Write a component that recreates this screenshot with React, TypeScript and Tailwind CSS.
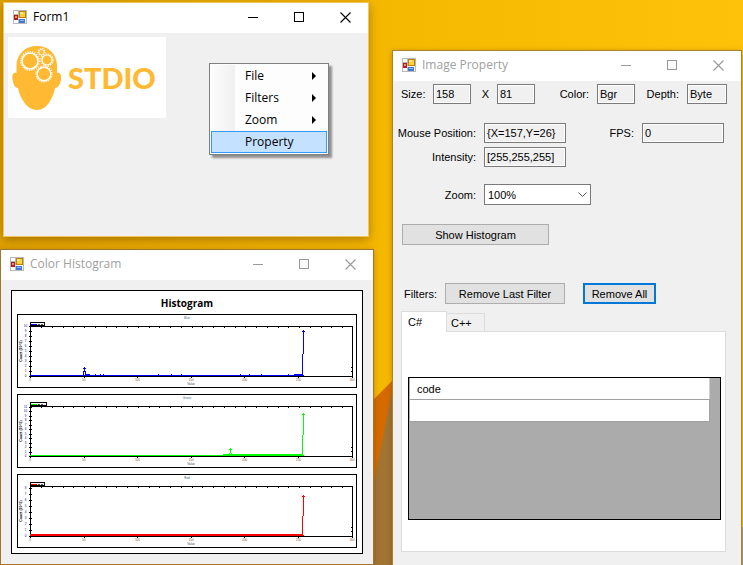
import { useState, type ReactNode } from 'react'

const titleFont = "font-['Open_Sans','Noto_Sans',sans-serif]"

function FormIcon() {
  return (
    <svg width="14" height="14" viewBox="0 0 14 14" aria-hidden="true" shapeRendering="crispEdges">
      <rect width="14" height="14" fill="#b9b9b9" />
      <path d="M1 1h4v3H1zM1 10h4v3H1zM12 9h1v4h-1z" fill="#fff" />
      <rect x="1" y="5" width="4" height="5" fill="#b11d1d" />
      <rect x="2" y="6" width="2" height="2" fill="#ef8b80" />
      <rect x="6" y="1" width="7" height="7" fill="#b98500" />
      <rect x="7" y="2" width="5" height="5" fill="#ffcf3d" />
      <rect x="7" y="2" width="3" height="2" fill="#ffe697" />
      <rect x="5" y="8" width="8" height="1" fill="#fff" />
      <rect x="6" y="9" width="6" height="4" fill="#3f78d8" />
      <rect x="7" y="10" width="4" height="1" fill="#8db8f5" />
    </svg>
  )
}

interface WindowProps {
  title: string
  active?: boolean
  className: string
  children: ReactNode
}

function Window({ title, active = false, className, children }: WindowProps) {
  return (
    <section className={`absolute flex flex-col border bg-[#f0f0f0] ${className}`}>
      <header className="flex h-[30px] shrink-0 items-center bg-white pb-0.5 pl-[9px]">
        <FormIcon />
        <h2 className={`ml-1.5 flex-1 text-[12px] leading-4 ${titleFont} ${active ? 'text-black' : 'text-[#a0a0a0]'}`}>
          {title}
        </h2>
        <div className={`flex ${active ? 'text-black' : 'text-[#999999]'}`}>
          <button aria-label="Minimize" className="flex w-[46px] justify-center">
            <svg width="11" height="11" viewBox="0 0 11 11" shapeRendering="crispEdges">
              <path d="M0 5.5h10" stroke="currentColor" fill="none" />
            </svg>
          </button>
          <button aria-label="Maximize" className="flex w-[46px] justify-center">
            <svg width="11" height="11" viewBox="0 0 11 11" shapeRendering="crispEdges">
              <rect x="0.5" y="0.5" width="9" height="9" stroke="currentColor" fill="none" />
            </svg>
          </button>
          <button aria-label="Close" className="flex w-[46px] justify-center">
            <svg width="11" height="11" viewBox="0 0 11 11">
              <path d="M0.5 0.5l10 10M10.5 0.5l-10 10" stroke="currentColor" strokeWidth="1.1" fill="none" />
            </svg>
          </button>
        </div>
      </header>
      {children}
    </section>
  )
}

function Gear({ cx, cy, r, width }: { cx: number; cy: number; r: number; width: number }) {
  return (
    <g fill="none" stroke="#fff">
      <circle cx={cx} cy={cy} r={r} strokeWidth={width} />
      <circle cx={cx} cy={cy} r={r + width / 2 + 0.5} strokeWidth="1.2" strokeDasharray="1.2 1.2" />
    </g>
  )
}

function Logo() {
  return (
    <div className="flex h-[81px] w-[158px] items-center bg-white pl-1">
      <svg width="50" height="66" viewBox="0 0 50 66" aria-hidden="true">
        <path
          d="M25 1C13 1 5 9 4.500 20V28C1 27 0 30 0.500 34C1 39 3 43 6 43C8 53 15 65 25 65C35 65 41 53 43 43C46 43 48.500 39 49 34C49.500 30 48 27 45 28V20C44.500 9 37 1 25 1Z"
          fill="#ffb933"
        />
        <Gear cx={18} cy={16} r={8} width={1.6} />
        <Gear cx={35} cy={15} r={5} width={1.2} />
        <Gear cx={29.500} cy={7} r={2.600} width={0.8} />
        <Gear cx={32} cy={29} r={6.800} width={1.4} />
      </svg>
      <span className="ml-1.5 font-['Lato',sans-serif] text-[29px] leading-9 font-black text-[#ffb933]">STDIO</span>
    </div>
  )
}

const menuItems = [
  { label: 'File', submenu: true },
  { label: 'Filters', submenu: true },
  { label: 'Zoom', submenu: true },
  { label: 'Property', submenu: false },
]

function ContextMenu() {
  return (
    <div
      role="menu"
      className={`absolute top-[60px] left-[205px] w-[120px] border border-[#808080] bg-[#fdfdfd] p-px shadow-[3px_3px_2px_rgba(0,0,0,0.4)] text-[12px] text-black ${titleFont}`}
    >
      {menuItems.map(({ label, submenu }) => (
        <button
          key={label}
          role="menuitem"
          className={`flex h-[22px] w-full items-center border pr-2.5 pl-[33px] text-left leading-4 ${
            submenu
              ? 'border-transparent bg-[linear-gradient(to_right,#fcfcfc,#f0f0f0_23px,#fdfdfd_23px)]'
              : 'border-[#3399ff] bg-[#c4e1ff]'
          }`}
        >
          <span className="flex-1">{label}</span>
          {submenu && (
            <svg width="4" height="8" viewBox="0 0 4 8" aria-hidden="true">
              <path d="M0 0l4 4-4 4z" fill="currentColor" />
            </svg>
          )}
        </button>
      ))}
    </div>
  )
}

interface Channel {
  name: string
  color: string
  yStep: number
  legendWidth: number
  line: string
  baseline: string
  marks: number[][]
}

const channels: Channel[] = [
  {
    name: 'Blue',
    color: '#0000ff',
    yStep: 5,
    legendWidth: 14,
    line: 'M65.500 60V56H66.500V53M67.500 56V60M284.500 60V39M285.500 39V17',
    baseline: 'M12 60.500H286M68 59.500h4M77 59.500h1M82 59.500h1M85 59.500h1M140 59.500h1M153 59.500h1M163 59.500h1M222 59.500h1M231 59.500h1M243 59.500h1M270 59.500h1M276 59.500h8',
    marks: [[66.5, 53.5], [285.5, 16.5]],
  },
  {
    name: 'Green',
    color: '#00ff00',
    yStep: 4.5,
    legendWidth: 16,
    line: 'M211.500 60V58M212.500 58V54M213.500 60V58M284.500 60V40M285.500 40V20',
    baseline: 'M12 60.500H286M205 59.500H285',
    marks: [[212.5, 54.5], [285.5, 19.5]],
  },
  {
    name: 'Red',
    color: '#ff0000',
    yStep: 6,
    legendWidth: 14,
    line: 'M284.500 60V41M285.500 41V22',
    baseline: 'M12 60.500H286M12 59.500H285',
    marks: [[285.5, 21.5]],
  },
]

const xTicks = [0, 50, 100, 150, 200, 250, 300]

function HistogramChart({ channel }: { channel: Channel }) {
  const { name, color, yStep, legendWidth, line, baseline, marks } = channel
  const yTicks = Array.from({ length: Math.floor(50 / yStep) + 1 }, (_, i) => i)
  const minorTicks = Array.from({ length: 29 }, (_, i) => 23 + i * 10.75)

  return (
    <div className="border border-black bg-white">
      <svg
        className="block w-full font-['Liberation_Sans',sans-serif]"
        viewBox="0 0 338 72"
        role="img"
        aria-label={`${name} histogram`}
      >
        <g fontSize="3" textAnchor="middle">
          <text x="169" y="4" fill="#446688">{name}</text>
          <text x="173" y="70" fill="#444">Value</text>
          {xTicks.map((value, i) => (
            <text key={value} x={12 + i * 53.700} y="66" fill="#7a5030">{value}</text>
          ))}
          {yTicks.map((i) => (
            <text key={i} x="7.500" y={62 - i * yStep} fill="#000080">{i}</text>
          ))}
          <text transform="translate(3.500 36) rotate(-90)" fontWeight="bold" fontSize="3.500">Count (10^3)</text>
        </g>
        <g fill="none" shapeRendering="crispEdges">
          <rect x="12.500" y="7.500" width={legendWidth} height="3" stroke="#000" />
          <path d="M13 9h6" stroke={color} />
          <path d="M20 9h2M23 9h2" stroke="#555" />
          <rect x="12.500" y="11.500" width="322" height="50" stroke="#000" />
          <path d={minorTicks.map((x) => `M${Math.round(x)}.500 12v1`).join('')} stroke="#000" />
          <path d={yTicks.map((i) => `M11 ${Math.round(61 - i * yStep)}.500h3`).join('')} stroke="#000" />
          <path d="M333 52.500h2M333 56.500h2" stroke="#000" />
          <path d={baseline} stroke={color} />
          <path d={line} stroke={color} />
          {marks.map(([x, y]) => (
            <path key={x} d={`M${x - 1.500} ${y}h3M${x} ${y - 1.500}v3`} stroke={color} />
          ))}
          <path d={xTicks.map((_, i) => `M${Math.round(12 + i * 53.600)}.500 61v2`).join('')} stroke="#000" />
        </g>
      </svg>
    </div>
  )
}

interface FieldProps {
  id: string
  label: string
  value: string
  labelClass: string
  inputClass: string
}

function Field({ id, label, value, labelClass, inputClass }: FieldProps) {
  return (
    <>
      <label htmlFor={id} className={`shrink-0 text-right whitespace-nowrap ${labelClass}`}>
        {label}
      </label>
      <input
        id={id}
        readOnly
        value={value}
        className={`ml-2 h-5 shrink-0 border border-[#7a7a7a] bg-[#f0f0f0] px-0.5 shadow-[inset_0_0_0_1px_#fff] outline-none ${inputClass}`}
      />
    </>
  )
}

function PropertyForm() {
  const [tab, setTab] = useState('C#')

  return (
    <div className="flex flex-col pr-[15px] pb-8 pl-2 font-['Liberation_Sans',Arial,sans-serif] text-[11px] leading-4 text-black">
      <div className="mt-[3px] flex items-center">
        <Field id="width" label="Size:" value="158" labelClass="w-6" inputClass="w-[38px]" />
        <Field id="height" label="X" value="81" labelClass="w-[18px]" inputClass="w-[38px]" />
        <Field id="color" label="Color:" value="Bgr" labelClass="w-[54px]" inputClass="w-[38px]" />
        <Field id="depth" label="Depth:" value="Byte" labelClass="w-11" inputClass="w-10" />
      </div>
      <div className="mt-[19px] flex items-center">
        <Field id="mouse" label="Mouse Position:" value="{X=157,Y=26}" labelClass="-ml-2 w-[83px]" inputClass="w-[82px]" />
        <Field id="fps" label="FPS:" value="0" labelClass="w-[68px]" inputClass="w-[82px]" />
      </div>
      <div className="mt-1 flex items-center">
        <Field id="intensity" label="Intensity:" value="[255,255,255]" labelClass="w-[75px]" inputClass="w-[82px]" />
      </div>
      <div className="mt-[17px] flex items-center">
        <label htmlFor="zoom" className="w-[75px] text-right">Zoom:</label>
        <div className="relative ml-2">
          <select id="zoom" className="h-[21px] w-[107px] appearance-none border border-[#7a7a7a] bg-white px-[3px] outline-none">
            <option>100%</option>
          </select>
          <svg className="pointer-events-none absolute top-2 right-1" width="9" height="6" viewBox="0 0 9 6" aria-hidden="true">
            <path d="M0.500 0.500l4 4 4-4" fill="none" stroke="#555" />
          </svg>
        </div>
      </div>
      <button className="mt-[19px] ml-px h-[21px] w-[147px] border border-[#adadad] bg-[#e1e1e1]">Show Histogram</button>
      <div className="mt-[38px] flex items-center">
        <span className="w-9 text-right">Filters:</span>
        <button className="ml-2 h-[21px] w-[120px] border border-[#adadad] bg-[#e1e1e1]">Remove Last Filter</button>
        <button className="ml-[18px] h-[21px] w-[73px] border-2 border-[#0078d7] bg-[#e1e1e1]">Remove All</button>
      </div>
      <div role="tablist" className="mt-[7px] flex items-end">
        {['C#', 'C++'].map((name) => (
          <button
            key={name}
            role="tab"
            aria-selected={tab === name}
            onClick={() => setTab(name)}
            className={
              tab === name
                ? 'relative z-10 -mb-px h-[21px] w-[46px] border border-b-0 border-[#dcdcdc] bg-white pl-1.5 text-left'
                : 'h-[18px] w-[38px] border border-b-0 border-l-0 border-[#dcdcdc] bg-[#f0f0f0] pl-1 text-left'
            }
          >
            {name}
          </button>
        ))}
      </div>
      <div role="tabpanel" className="border border-[#dcdcdc] bg-white pt-[45px] pr-1 pb-[31px] pl-1.5">
        <div className="h-[143px] border border-black bg-[#ababab] pr-2.5 pl-px">
          <table className="w-full border-collapse">
            <thead>
              <tr>
                <th className="h-[21px] border border-t-0 border-l-0 border-[#d0d0d0] border-b-[#a0a0a0] bg-white p-0 pt-0.5 pl-[7px] text-left font-normal">code</th>
              </tr>
            </thead>
            <tbody>
              <tr>
                <td className="h-[22px] border border-l-0 border-[#a0a0a0] bg-white p-0" />
              </tr>
            </tbody>
          </table>
        </div>
      </div>
    </div>
  )
}

function Wallpaper() {
  return (
    <svg className="absolute inset-0 h-full w-full" viewBox="0 0 743 565" preserveAspectRatio="xMinYMin slice" aria-hidden="true">
      <defs>
        <linearGradient id="sky" x1="0" y1="0" x2="1" y2="0">
          <stop offset="0" stopColor="#e2a300" />
          <stop offset="0.5" stopColor="#f5b800" />
          <stop offset="1" stopColor="#ffc20a" />
        </linearGradient>
      </defs>
      <rect width="743" height="565" fill="url(#sky)" />
      <path d="M393 380L373 400V565H393Z" fill="#d56a00" />
      <path d="M393 386L374 482V565H393Z" fill="#a17433" />
      <path d="M741 527h2v38h-2z" fill="#b0a28c" />
    </svg>
  )
}

export default function App() {
  return (
    <main className="relative h-screen w-full overflow-hidden">
      <Wallpaper />

      <Window
        title="Form1"
        active
        className="top-0.5 left-[3px] h-[235px] w-[366px] border-[#f0c562] shadow-[0_3px_10px_rgba(90,50,0,0.45)]"
      >
        <div className="p-1">
          <Logo />
        </div>
        <ContextMenu />
      </Window>

      <Window
        title="Color Histogram"
        className="top-[249px] left-0 w-[374px] border-[#a57528] shadow-[0_1px_5px_rgba(90,50,0,0.35)]"
      >
        <div className="p-2.5">
          <div className="flex flex-col gap-1.5 border border-black bg-white px-[5px] pb-[5px]">
            <h3 className={`-mb-1.5 h-[23px] pt-1 text-center text-[10px] leading-4 font-bold text-black ${titleFont}`}>Histogram</h3>
            {channels.map((channel) => (
              <HistogramChart key={channel.name} channel={channel} />
            ))}
          </div>
        </div>
      </Window>

      <Window
        title="Image Property"
        className="top-[50px] left-[392px] w-[350px] border-[#a8842c] shadow-[0_1px_5px_rgba(90,50,0,0.35)]"
      >
        <PropertyForm />
      </Window>
    </main>
  )
}
